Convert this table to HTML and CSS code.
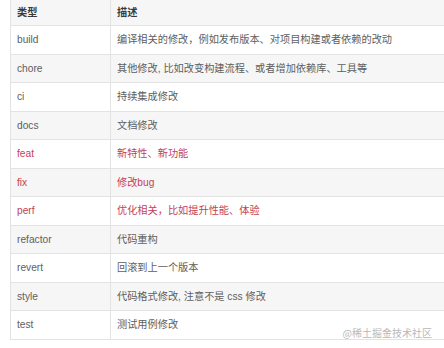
FILE: index.html
```html
<!DOCTYPE html>
<html lang="zh">
<head>
<meta charset="utf-8">
<link rel="stylesheet" href="styles.css">
</head>
<body>
<div class="wrap">
<table class="types">
  <thead>
    <tr><th class="c1">类型</th><th>描述</th></tr>
  </thead>
  <tbody>
    <tr><td>build</td><td>编译相关的修改，例如发布版本、对项目构建或者依赖的改动</td></tr>
    <tr><td>chore</td><td>其他修改, 比如改变构建流程、或者增加依赖库、工具等</td></tr>
    <tr><td>ci</td><td>持续集成修改</td></tr>
    <tr><td>docs</td><td>文档修改</td></tr>
    <tr class="red"><td>feat</td><td>新特性、新功能</td></tr>
    <tr class="red"><td>fix</td><td>修改bug</td></tr>
    <tr class="red"><td>perf</td><td>优化相关，比如提升性能、体验</td></tr>
    <tr><td>refactor</td><td>代码重构</td></tr>
    <tr><td>revert</td><td>回滚到上一个版本</td></tr>
    <tr><td>style</td><td>代码格式修改, 注意不是 css 修改</td></tr>
    <tr><td>test</td><td>测试用例修改</td></tr>
  </tbody>
</table>
<div class="mark">@稀土掘金技术社区</div>
</div>
</body>
</html>
```
FILE: styles.css
```css
html, body {
  margin: 0;
  padding: 0;
  background: #fff;
  overflow: hidden;
}
.wrap {
  position: relative;
  width: 444px;
  height: 348px;
  overflow: hidden;
}
.types {
  border-collapse: collapse;
  margin: -1px 0 0 10px;
  width: 460px;
  font-family: "Liberation Sans", "Noto Sans CJK SC", sans-serif;
  font-size: 10.2px;
  color: #5e5e5e;
  table-layout: fixed;
}
.types th, .types td {
  border: 1px solid #e3e3e3;
  padding: 0 6px;
  text-align: left;
  white-space: nowrap;
  line-height: 27.5px;
}
.types th {
  font-weight: bold;
  color: #3a3a3a;
  line-height: 25px;
  background: #f6f6f6;
}
.types .c1 { width: 87px; }
.types tbody tr:nth-child(even) td { background: #f6f6f6; }
.types tr.red td { color: #c43f52; }
.mark {
  position: absolute;
  right: 12px;
  top: 325px;
  font-family: "Noto Sans CJK SC", sans-serif;
  font-size: 10px;
  color: #b8b8b8;
}
```
